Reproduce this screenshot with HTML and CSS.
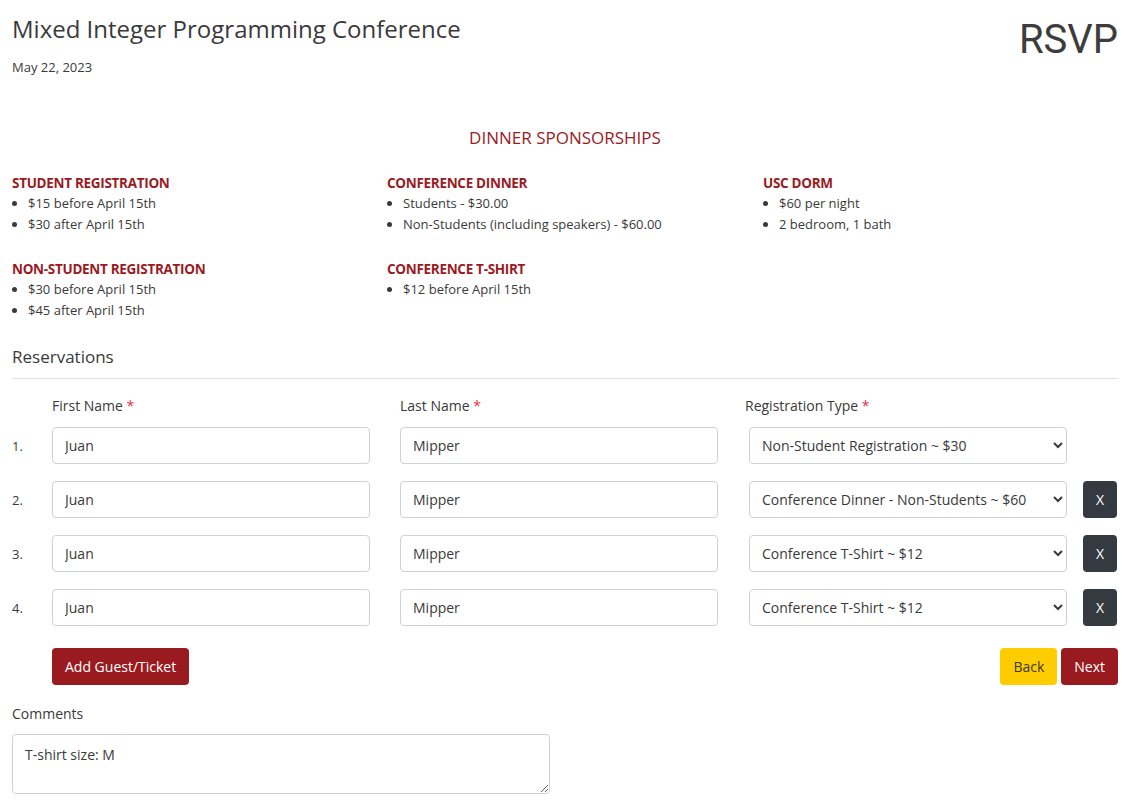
FILE: index.html
```html
<!DOCTYPE html>
<html lang="en">
<head>
<meta charset="utf-8">
<title>RSVP</title>
<link rel="stylesheet" href="styles.css">
</head>
<body>
<div class="page">
  <header class="top">
    <div>
      <h1 class="title">Mixed Integer Programming Conference</h1>
      <div class="date">May 22, 2023</div>
    </div>
    <div class="rsvp">RSVP</div>
  </header>

  <h2 class="section-title">DINNER SPONSORSHIPS</h2>

  <div class="prices">
    <div class="price">
      <h3>STUDENT REGISTRATION</h3>
      <ul><li>$15 before April 15th</li><li>$30 after April 15th</li></ul>
    </div>
    <div class="price">
      <h3>CONFERENCE DINNER</h3>
      <ul><li>Students - $30.00</li><li>Non-Students (including speakers) - $60.00</li></ul>
    </div>
    <div class="price">
      <h3>USC DORM</h3>
      <ul><li>$60 per night</li><li>2 bedroom, 1 bath</li></ul>
    </div>
    <div class="price">
      <h3>NON-STUDENT REGISTRATION</h3>
      <ul><li>$30 before April 15th</li><li>$45 after April 15th</li></ul>
    </div>
    <div class="price">
      <h3>CONFERENCE T-SHIRT</h3>
      <ul><li>$12 before April 15th</li></ul>
    </div>
  </div>

  <h2 class="res-title">Reservations</h2>

  <div class="grid">
    <div></div>
    <div class="label">First Name <span class="req">*</span></div>
    <div class="label">Last Name <span class="req">*</span></div>
    <div class="label label-sel">Registration Type <span class="req">*</span></div>
    <div></div>

    <div class="num">1.</div>
    <input class="field" value="Juan">
    <input class="field" value="Mipper">
    <select class="field sel"><option>Non-Student Registration ~ $30</option></select>
    <div></div>

    <div class="num">2.</div>
    <input class="field" value="Juan">
    <input class="field" value="Mipper">
    <select class="field sel"><option>Conference Dinner - Non-Students ~ $60</option></select>
    <button class="xbtn">X</button>

    <div class="num">3.</div>
    <input class="field" value="Juan">
    <input class="field" value="Mipper">
    <select class="field sel"><option>Conference T-Shirt ~ $12</option></select>
    <button class="xbtn">X</button>

    <div class="num">4.</div>
    <input class="field" value="Juan">
    <input class="field" value="Mipper">
    <select class="field sel"><option>Conference T-Shirt ~ $12</option></select>
    <button class="xbtn">X</button>
  </div>

  <div class="actions">
    <button class="btn red">Add Guest/Ticket</button>
    <div class="nav">
      <button class="btn yellow">Back</button>
      <button class="btn red">Next</button>
    </div>
  </div>

  <div class="comments">
    <div class="clabel">Comments</div>
    <textarea class="area">T-shirt size: M</textarea>
  </div>
</div>
</body>
</html>
```

FILE: styles.css
```css
* { box-sizing: border-box; }
body {
  margin: 0;
  font-family: "Open Sans", "Liberation Sans", sans-serif;
  color: #3a3a3a;
  background: #fff;
}
.page { padding: 0 12px; }
.top {
  display: flex;
  justify-content: space-between;
  align-items: flex-start;
  padding-top: 13px;
}
.title {
  margin: 0;
  font-size: 24px;
  font-weight: 400;
  line-height: 32px;
  color: #3a3a3a;
}
.date { font-size: 13px; margin-top: 13px; }
.rsvp {
  font-family: Roboto, "Liberation Sans", sans-serif;
  font-size: 40px;
  line-height: 52px;
  color: #3d3d3d;
  margin-top: 1px;
}
.section-title {
  text-align: center;
  color: #9a1b1f;
  font-size: 17px;
  font-weight: 400;
  margin: 51px 0 0;
  line-height: 22px;
}
.prices {
  display: grid;
  grid-template-columns: 375px 376px 1fr;
  margin-top: 24px;
}
.price { padding-bottom: 24px; }
.price h3 {
  margin: 0;
  font-size: 13.5px;
  font-weight: 700;
  color: #9a1b1f;
  line-height: 20px;
  letter-spacing: -0.3px;
}
.price ul {
  margin: 0;
  padding-left: 16px;
  font-size: 13px;
  line-height: 21px;
}
.res-title {
  margin: 0;
  font-size: 17px;
  font-weight: 400;
  line-height: 24px;
  padding-bottom: 9px;
  border-bottom: 1px solid #e2e2e2;
}
.grid {
  display: grid;
  grid-template-columns: 40px 348px 349px 334px 34px;
  row-gap: 17px;
  align-items: center;
  margin-top: 17px;
}
.label { font-size: 14px; line-height: 20px; margin-bottom: -6px; }
.label-sel { margin-left: -4px; }
.req { color: #dc3545; }
.num { font-size: 13px; }
.field {
  width: 318px;
  height: 37px;
  border: 1px solid #cfd2d6;
  border-radius: 4px;
  padding: 0 12px;
  font-family: inherit;
  font-size: 14px;
  color: #3a3a3a;
  background: #fff;
}
.sel { appearance: auto; padding-left: 8px; }
.xbtn {
  width: 34px;
  height: 37px;
  border: 0;
  border-radius: 4px;
  background: #343a40;
  color: #fff;
  font-family: inherit;
  font-size: 14px;
  padding: 0;
}
.actions {
  display: flex;
  justify-content: space-between;
  align-items: center;
  margin-top: 22px;
  padding-left: 40px;
}
.nav { display: flex; gap: 4px; }
.btn {
  height: 37px;
  border: 0;
  border-radius: 4px;
  padding: 0 13px;
  font-family: inherit;
  font-size: 14px;
}
.red { background: #9a1b1f; color: #fff; }
.yellow { background: #ffcc00; color: #3a3a3a; }
.comments { margin-top: 19px; }
.clabel { font-size: 14px; }
.area {
  display: block;
  margin-top: 11px;
  width: 538px;
  height: 60px;
  border: 1px solid #cfd2d6;
  border-radius: 4px;
  padding: 10px 12px;
  font-family: inherit;
  font-size: 14px;
  color: #3a3a3a;
  resize: vertical;
}
```
